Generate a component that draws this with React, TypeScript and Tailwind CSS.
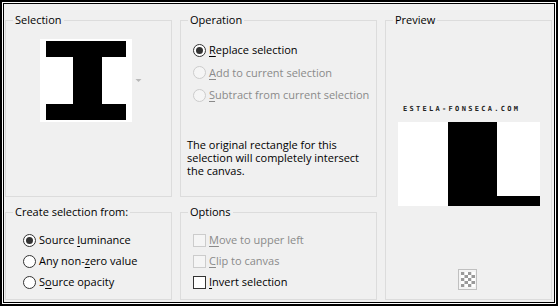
import React from "react";

function Radio({ checked = false, disabled = false }: { checked?: boolean; disabled?: boolean }) {
  return (
    <span
      className={`w-[13px] h-[13px] shrink-0 rounded-full border flex items-center justify-center ${
        disabled ? "border-[#cccccc] bg-[#f5f5f5]" : "border-[#333333] bg-white"
      }`}
    >
      {checked && <span className="w-[7px] h-[7px] rounded-full bg-[#333333]" />}
    </span>
  );
}

function Check({ disabled = false }: { disabled?: boolean }) {
  return (
    <span
      className={`w-[13px] h-[13px] shrink-0 border ${
        disabled ? "border-[#cccccc] bg-[#f5f5f5]" : "border-[#333333] bg-white"
      }`}
    />
  );
}

function U({ children }: { children: React.ReactNode }) {
  return <span className="underline underline-offset-[2px] decoration-1">{children}</span>;
}

function Row({
  h,
  control,
  disabled,
  children,
}: {
  h: string;
  control: React.ReactNode;
  disabled?: boolean;
  children: React.ReactNode;
}) {
  return (
    <div className={`flex items-center gap-[3px] ${h} ${disabled ? "text-[#8a8a8a]" : "text-black"}`}>
      {control}
      <span className="leading-[14px]">{children}</span>
    </div>
  );
}

function Group({
  title,
  className = "",
  children,
}: {
  title: string;
  className?: string;
  children: React.ReactNode;
}) {
  return (
    <fieldset className={`border border-[#dcdcdc] min-w-0 m-0 p-0 ${className}`}>
      <legend className="ml-[7px] px-[2px] leading-[16px] text-black">{title}</legend>
      {children}
    </fieldset>
  );
}

export default function App() {
  return (
    <div className="w-[558px] h-[306px] border-2 border-black bg-white p-[1px] font-['Open_Sans',sans-serif] text-[11px]">
      <div className="w-full h-full border border-black bg-[#f0f0f0] pl-[1px] pt-[8px]">
        <div className="grid grid-cols-[167px_197px_167px] grid-rows-[185px_96px] gap-x-2 gap-y-[7px]">
          <Group title="Selection">
            <div className="flex items-center mt-[11px] ml-[34px]">
              <svg width="92" height="83" viewBox="0 0 92 83">
                <rect x="0" y="0" width="92" height="83" fill="#ffffff" />
                <rect x="6" y="2" width="80" height="16" fill="#000000" />
                <rect x="33" y="17" width="29" height="49" fill="#000000" />
                <rect x="6" y="65" width="80" height="16" fill="#000000" />
              </svg>
              <svg width="7" height="5" viewBox="0 0 7 5" className="ml-[3px]">
                <path d="M0.5 1 L6.5 1 L3.5 4 Z" fill="#b8b8b8" />
              </svg>
            </div>
          </Group>

          <Group title="Operation">
            <div className="pl-[12px] mt-[11px]">
              <Row h="h-[22.5px]" control={<Radio checked />}>
                <U>R</U>eplace selection
              </Row>
              <Row h="h-[22.5px]" control={<Radio disabled />} disabled>
                <U>A</U>dd to current selection
              </Row>
              <Row h="h-[22.5px]" control={<Radio disabled />} disabled>
                <U>S</U>ubtract from current selection
              </Row>
            </div>
            <div className="pl-[6px] mt-[31px] text-black">
              <div className="h-[13px] leading-[13px]">The original rectangle for this</div>
              <div className="h-[13px] leading-[13px]">selection will completely intersect</div>
              <div className="h-[13px] leading-[13px]">the canvas.</div>
            </div>
          </Group>

          <Group title="Preview" className="row-span-2">
            <div className="ml-[17px] mt-[77px] h-[8px] flex items-center font-['DejaVu_Sans_Mono',monospace] font-bold text-[7px] tracking-[2.3px] text-[#222222]">
              ESTELA-FONSECA.COM
            </div>
            <svg width="142" height="84" viewBox="0 0 142 84" className="ml-[12px] mt-[9px] block">
              <rect x="0" y="0" width="142" height="84" fill="#ffffff" />
              <rect x="50" y="0" width="49" height="84" fill="#000000" />
              <rect x="99" y="74" width="43" height="10" fill="#000000" />
            </svg>
            <svg width="19" height="21" viewBox="0 0 19 21" className="ml-[72px] mt-[63px] block">
              <rect x="0.5" y="0.5" width="18" height="20" fill="#f4f4f4" stroke="#c0c0c0" />
              {[0, 1, 2, 3, 4].map((r) =>
                [0, 1, 2, 3].map((c) => (
                  <rect
                    key={`${r}-${c}`}
                    x={3 + c * 3.5}
                    y={3 + r * 3}
                    width="3.5"
                    height="3"
                    fill={(r + c) % 2 === 0 ? "#9a9a9a" : "#ffffff"}
                  />
                ))
              )}
            </svg>
          </Group>

          <Group title="Create selection from:">
            <div className="pl-[17px] mt-[9.5px]">
              <Row h="h-[21px]" control={<Radio checked />}>
                Source <U>l</U>uminance
              </Row>
              <Row h="h-[21px]" control={<Radio />}>
                Any non-<U>z</U>ero value
              </Row>
              <Row h="h-[21px]" control={<Radio />}>
                S<U>o</U>urce opacity
              </Row>
            </div>
          </Group>

          <Group title="Options">
            <div className="pl-[12px] mt-[9.5px]">
              <Row h="h-[21px]" control={<Check disabled />} disabled>
                <U>M</U>ove to upper left
              </Row>
              <Row h="h-[21px]" control={<Check disabled />} disabled>
                <U>C</U>lip to canvas
              </Row>
              <Row h="h-[21px]" control={<Check />}>
                <U>I</U>nvert selection
              </Row>
            </div>
          </Group>
        </div>
      </div>
    </div>
  );
}
